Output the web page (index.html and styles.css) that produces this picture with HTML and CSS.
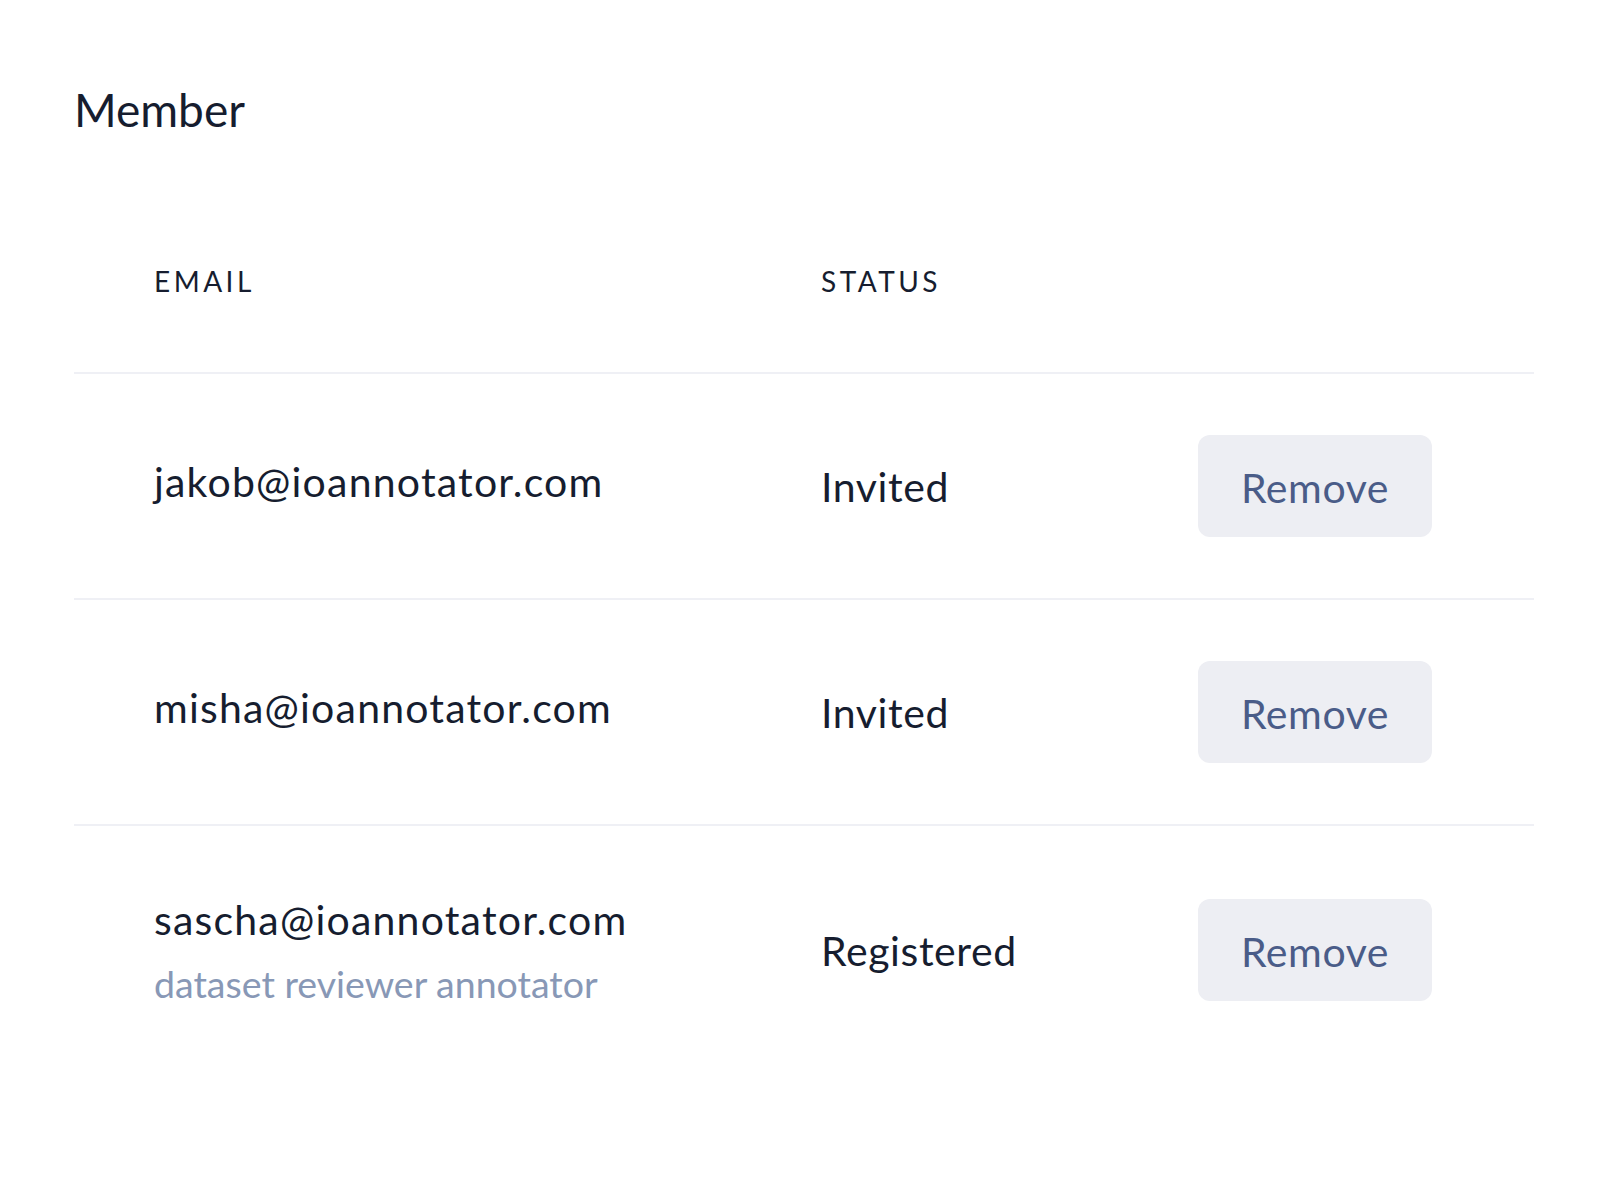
FILE: index.html
```html
<!DOCTYPE html>
<html>
<head>
<meta charset="utf-8">
<link rel="stylesheet" href="styles.css">
</head>
<body>
<div class="page">
  <h1 class="title">Member</h1>
  <div class="table">
    <div class="row head">
      <div class="th">EMAIL</div>
      <div class="th">STATUS</div>
      <div></div>
    </div>
    <div class="row">
      <div class="email"><div class="addr">jakob@ioannotator.com</div></div>
      <div class="status">Invited</div>
      <div><button class="btn">Remove</button></div>
    </div>
    <div class="row">
      <div class="email"><div class="addr">misha@ioannotator.com</div></div>
      <div class="status">Invited</div>
      <div><button class="btn">Remove</button></div>
    </div>
    <div class="row last">
      <div class="email stacked"><div>sascha@ioannotator.com</div><div class="roles">dataset reviewer annotator</div></div>
      <div class="status">Registered</div>
      <div><button class="btn">Remove</button></div>
    </div>
  </div>
</div>
</body>
</html>
```

FILE: styles.css
```css
html, body { margin: 0; padding: 0; background: #fff; }
body { font-family: Lato, "Noto Sans", sans-serif; color: #161d2f; }
.page { padding: 82px 64px 0 74px; }
.title { margin: 0; font-size: 46px; font-weight: 400; line-height: 56px; }
.row {
  display: grid;
  grid-template-columns: 667px 377px 234px;
  align-items: center;
  padding-left: 80px;
  border-bottom: 2px solid #eff0f5;
  height: 224px;
}
.row.head { height: 234px; align-items: end; }
.row.head .th { padding-bottom: 81px; }
.row.last { border-bottom: none; height: 248px; }
.th { font-size: 28px; letter-spacing: 3.5px; line-height: 20px; }
.email { font-size: 41px; line-height: 64px; letter-spacing: 1.2px; }
.email .addr { margin-top: -8px; }
.email.stacked { padding-top: 4px; }
.roles { color: #8898b6; font-size: 37.5px; letter-spacing: 0; }
.status { font-size: 41px; letter-spacing: 0.6px; }
.btn {
  width: 234px; height: 102px;
  border: none; border-radius: 12px;
  background: #edeef3; color: #4a5c88;
  font-family: inherit; font-size: 41px; letter-spacing: 0.6px;
  padding: 0; padding-top: 2px;
}
```
